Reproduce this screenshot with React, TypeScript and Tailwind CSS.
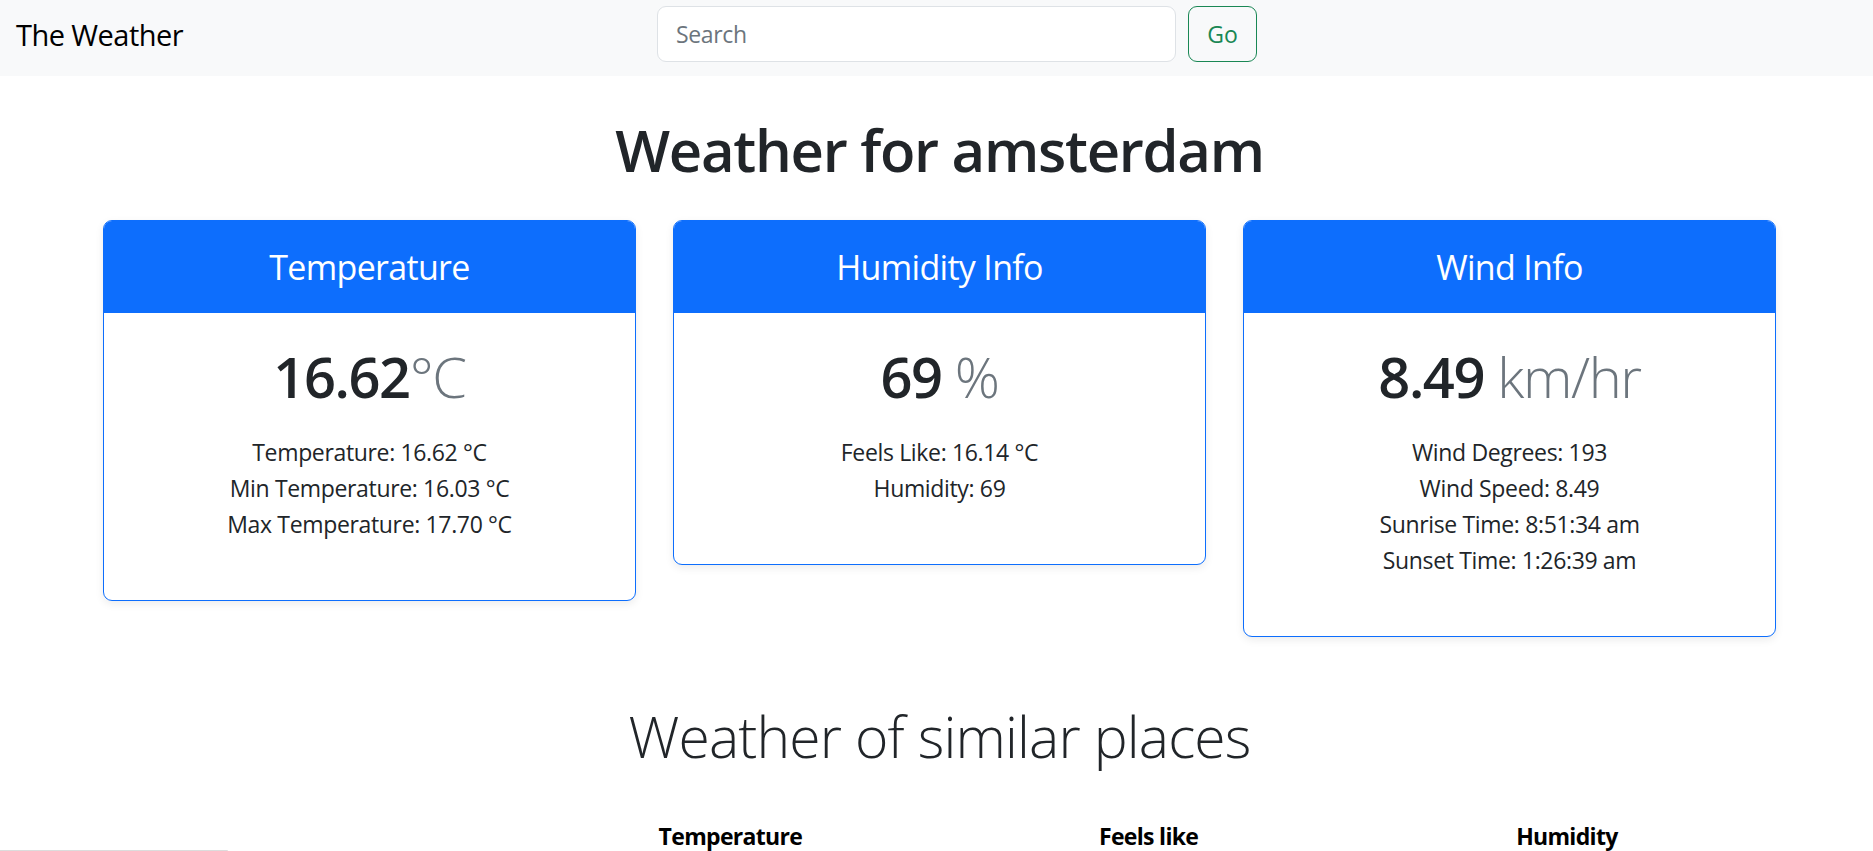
import React from "react";

const font = { fontFamily: '"Open Sans", "Noto Sans", Arial, sans-serif' };

function Card({
  title,
  value,
  unit,
  lines,
}: {
  title: string;
  value: string;
  unit: string;
  lines: string[];
}) {
  return (
    <div className="w-[533px] rounded-[9px] border border-[#0d6efd] bg-white shadow-[0_3px_8px_rgba(0,0,0,0.08)] overflow-hidden">
      <div className="h-[92px] bg-[#0d6efd] flex items-center justify-center">
        <h4 className="text-[34px] leading-[43px] tracking-[-0.02em] font-normal text-white">{title}</h4>
      </div>
      <div className="pt-[27px] pb-[58px] text-center">
        <div className="text-[56px] leading-[72px] tracking-[-0.025em] font-semibold text-[#212529]">
          {value}
          <span className="font-light text-[#6c757d]">{unit}</span>
        </div>
        <ul className="mt-[22px] text-[23px] leading-[36px] tracking-[-0.015em] text-[#212529]">
          {lines.map((l) => (
            <li key={l}>{l}</li>
          ))}
        </ul>
      </div>
    </div>
  );
}

export default function App() {
  return (
    <div className="min-h-screen bg-white text-[#212529]" style={font}>
      <nav className="h-[76px] bg-[#f8f9fa] flex items-start pt-[6px] pl-[16px]">
        <div className="w-[641px] h-[56px] flex items-center">
          <span className="text-[29px] leading-[45px] tracking-[-0.019em] text-black">The Weather</span>
        </div>
        <div className="flex items-center">
          <div className="w-[519px] h-[56px] rounded-[9px] border border-[#dee2e6] bg-white flex items-center px-[18px]">
            <span className="text-[23px] leading-[36px] tracking-[-0.015em] text-[#6c757d]">Search</span>
          </div>
          <button className="ml-[12px] w-[69px] h-[56px] rounded-[9px] border border-[#198754] text-[#198754] text-[23px] leading-[36px] bg-transparent">
            Go
          </button>
        </div>
      </nav>

      <main className="pl-[103px] pr-[97px]">
        <h1 className="mt-[38px] text-center text-[58px] leading-[72px] tracking-[-0.022em] font-semibold text-[#212529]">
          Weather for amsterdam
        </h1>

        <div className="mt-[34px] flex items-start gap-[37px]">
          <Card
            title="Temperature"
            value="16.62"
            unit="°C"
            lines={[
              "Temperature: 16.62 °C",
              "Min Temperature: 16.03 °C",
              "Max Temperature: 17.70 °C",
            ]}
          />
          <Card
            title="Humidity Info"
            value="69"
            unit=" %"
            lines={["Feels Like: 16.14 °C", "Humidity: 69"]}
          />
          <Card
            title="Wind Info"
            value="8.49"
            unit=" km/hr"
            lines={[
              "Wind Degrees: 193",
              "Wind Speed: 8.49",
              "Sunrise Time: 8:51:34 am",
              "Sunset Time: 1:26:39 am",
            ]}
          />
        </div>

        <h2 className="mt-[63px] text-center text-[57px] leading-[72px] tracking-[-0.015em] font-light text-[#212529]">
          Weather of similar places
        </h2>

        <table className="mt-[34px] w-full table-fixed border-collapse">
          <thead>
            <tr>
              <th className="py-[12px] text-[23px] leading-[36px] tracking-[-0.03em] font-bold text-black"></th>
              <th className="py-[12px] text-[23px] leading-[36px] tracking-[-0.03em] font-bold text-black">Temperature</th>
              <th className="py-[12px] text-[23px] leading-[36px] tracking-[-0.03em] font-bold text-black">Feels like</th>
              <th className="py-[12px] text-[23px] leading-[36px] tracking-[-0.03em] font-bold text-black">Humidity</th>
            </tr>
          </thead>
        </table>
      </main>

      <div className="fixed bottom-0 left-0 w-[228px] h-[1px] bg-[#dcdcdc] rounded-tr-[2px]" />
    </div>
  );
}
